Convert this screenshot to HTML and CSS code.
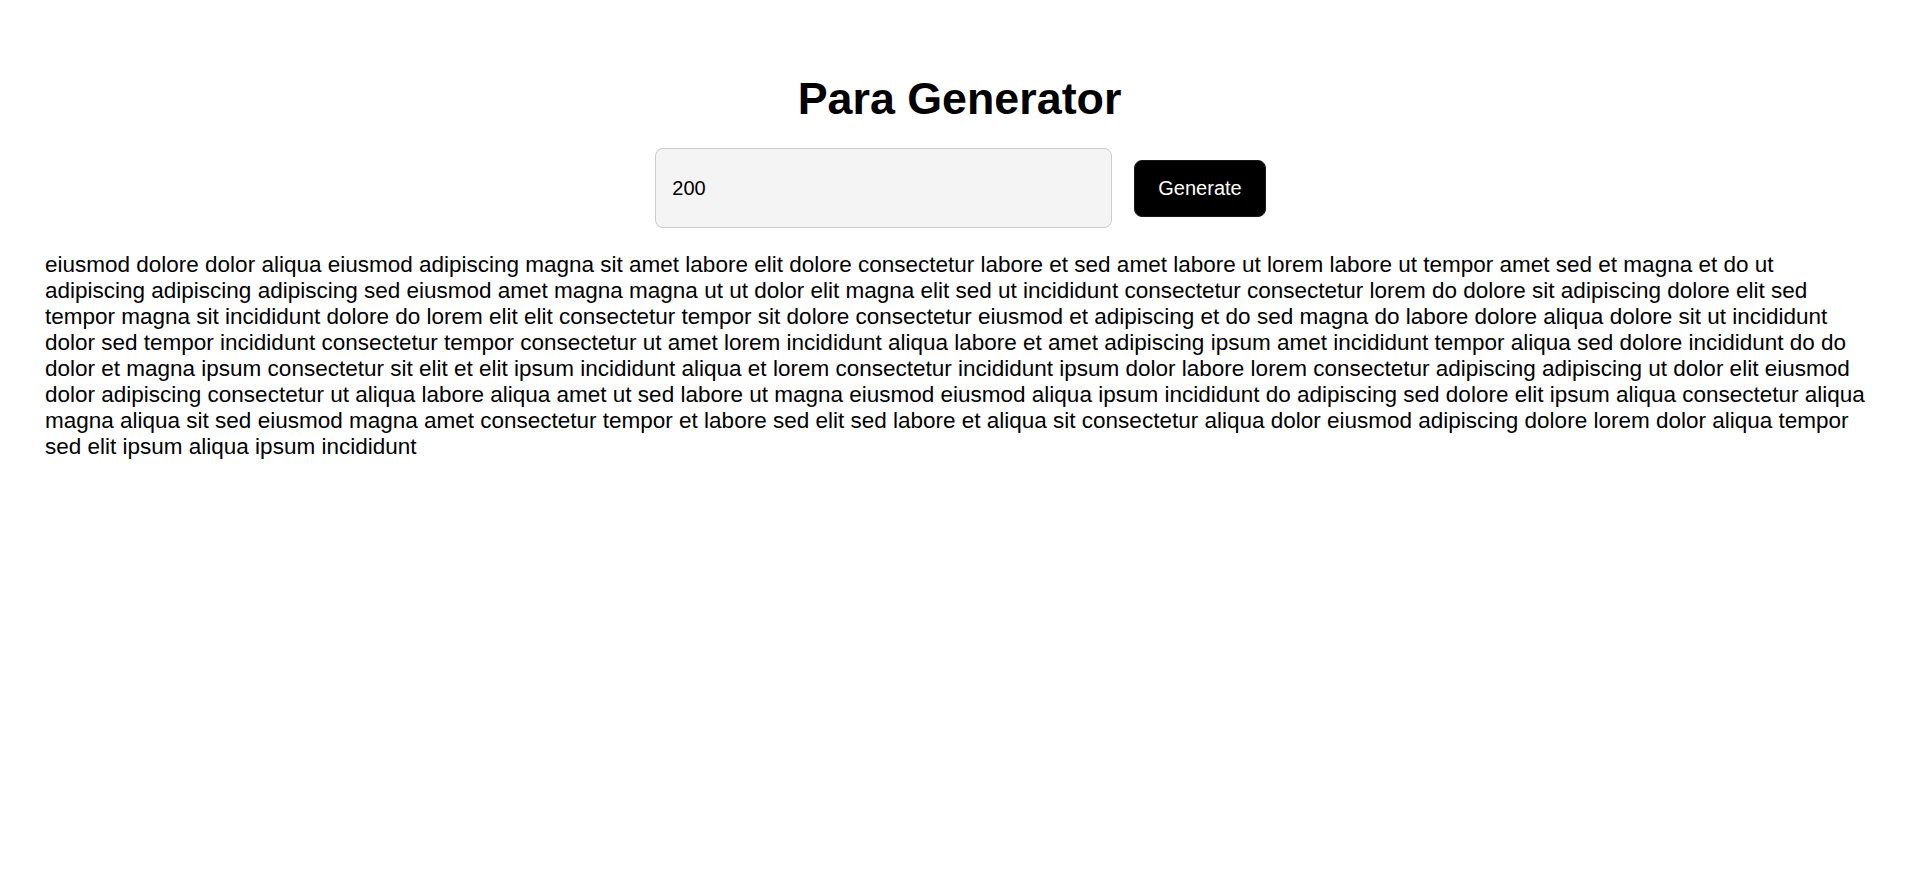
FILE: index.html
```html
<!DOCTYPE html>
<html lang="en">
<head>
<meta charset="utf-8">
<title>Para Generator</title>
<link rel="stylesheet" href="styles.css">
</head>
<body>
<main class="app">
  <h1 class="title">Para Generator</h1>
  <form class="controls" onsubmit="return false;">
    <input class="count-input" type="number" value="200">
    <button class="generate-btn" type="submit">Generate</button>
  </form>
  <p class="output">eiusmod dolore dolor aliqua eiusmod adipiscing magna sit amet labore elit dolore consectetur labore et sed amet labore ut lorem labore ut tempor amet sed et magna et do ut adipiscing adipiscing adipiscing sed eiusmod amet magna magna ut ut dolor elit magna elit sed ut incididunt consectetur consectetur lorem do dolore sit adipiscing dolore elit sed tempor magna sit incididunt dolore do lorem elit elit consectetur tempor sit dolore consectetur eiusmod et adipiscing et do sed magna do labore dolore aliqua dolore sit ut incididunt dolor sed tempor incididunt consectetur tempor consectetur ut amet lorem incididunt aliqua labore et amet adipiscing ipsum amet incididunt tempor aliqua sed dolore incididunt do do dolor et magna ipsum consectetur sit elit et elit ipsum incididunt aliqua et lorem consectetur incididunt ipsum dolor labore lorem consectetur adipiscing adipiscing ut dolor elit eiusmod dolor adipiscing consectetur ut aliqua labore aliqua amet ut sed labore ut magna eiusmod eiusmod aliqua ipsum incididunt do adipiscing sed dolore elit ipsum aliqua consectetur aliqua magna aliqua sit sed eiusmod magna amet consectetur tempor et labore sed elit sed labore et aliqua sit consectetur aliqua dolor eiusmod adipiscing dolore lorem dolor aliqua tempor sed elit ipsum aliqua ipsum incididunt</p>
</main>
</body>
</html>
```

FILE: styles.css
```css
html, body {
  margin: 0;
  padding: 0;
  background: #ffffff;
}

body {
  font-family: "Liberation Sans", Arial, sans-serif;
  color: #000000;
}

.app {
  display: flex;
  flex-direction: column;
  align-items: center;
  padding: 73px 0 0;
}

.title {
  margin: 0;
  font-size: 44.8px;
  font-weight: bold;
  text-align: center;
}

.controls {
  display: flex;
  align-items: center;
  gap: 22px;
  margin: 24px 0 0 2px;
}

.count-input {
  box-sizing: border-box;
  width: 457px;
  height: 80px;
  padding: 0 16px;
  font-family: "Liberation Sans", Arial, sans-serif;
  font-size: 20px;
  color: #000000;
  background: #f4f4f4;
  border: 1px solid #cccccc;
  border-radius: 8px;
  outline: none;
  -moz-appearance: textfield;
}

.count-input::-webkit-outer-spin-button,
.count-input::-webkit-inner-spin-button {
  -webkit-appearance: none;
  margin: 0;
}

.generate-btn {
  box-sizing: border-box;
  height: 57px;
  padding: 0 23px;
  font-family: "Liberation Sans", Arial, sans-serif;
  font-size: 20px;
  color: #ffffff;
  background: #000000;
  border: 1px solid #1a1a1a;
  border-radius: 8px;
  cursor: pointer;
}

.output {
  align-self: stretch;
  margin: 24px 0 0;
  padding: 0 50px 0 45px;
  font-size: 22.5px;
  line-height: normal;
}
```
